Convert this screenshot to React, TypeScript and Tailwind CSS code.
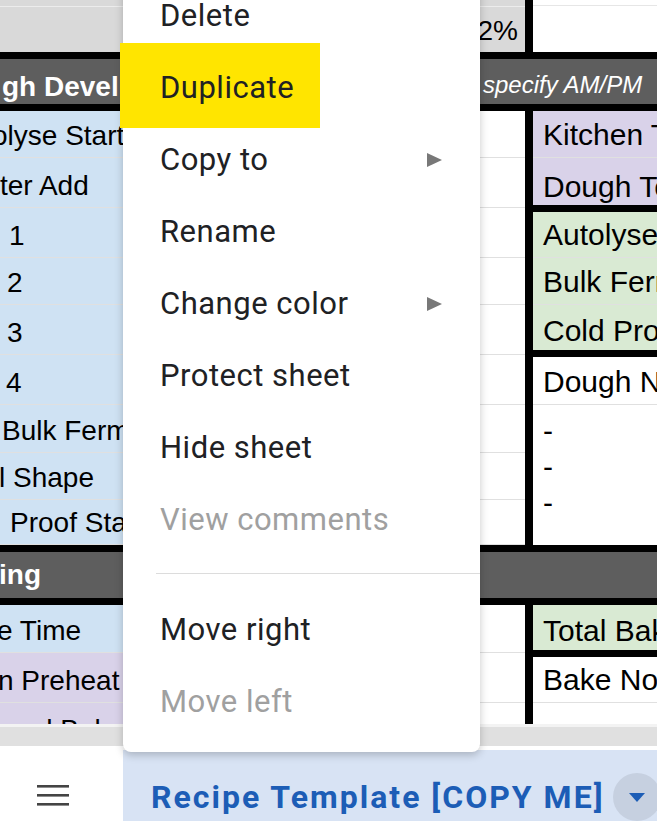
import React from 'react';

type LeftRow = { h: string; text: string; off: string; bg: string };
type RightCell = { h: string; text: string; cls: string };

// left column (A) + narrow column (B) rows of the body block
const bodyLeft: LeftRow[] = [
  { h: 'h-[47px]', text: 'olyse Start', off: '-ml-[8px]', bg: 'bg-[#cfe2f3]' },
  { h: 'h-[50px]', text: 'ter Add', off: 'ml-0', bg: 'bg-[#cfe2f3]' },
  { h: 'h-[50px]', text: '1', off: 'ml-[9px]', bg: 'bg-[#cfe2f3]' },
  { h: 'h-[47px]', text: '2', off: 'ml-[7px]', bg: 'bg-[#cfe2f3]' },
  { h: 'h-[50px]', text: '3', off: 'ml-[7px]', bg: 'bg-[#cfe2f3]' },
  { h: 'h-[50px]', text: '4', off: 'ml-[6px]', bg: 'bg-[#cfe2f3]' },
  { h: 'h-[48px]', text: 'Bulk Ferm', off: 'ml-[2px]', bg: 'bg-[#cfe2f3]' },
  { h: 'h-[47px]', text: 'l Shape', off: '-ml-[1px]', bg: 'bg-[#cfe2f3]' },
  { h: 'h-[45px]', text: 'Proof Sta', off: 'ml-[10px]', bg: 'bg-[#cfe2f3]' },
];

const bodyRight: RightCell[] = [
  { h: 'h-[47px]', text: 'Kitchen T', cls: 'bg-[#d9d2e9] border-b border-[#e0e0e0] pb-[7px]' },
  { h: 'h-[54px]', text: 'Dough Te', cls: 'bg-[#d9d2e9] border-b-[7px] border-black pb-[3px]' },
  { h: 'h-[46px]', text: 'Autolyse', cls: 'bg-[#d9ead3] border-b border-[#e0e0e0] pb-[7px]' },
  { h: 'h-[47px]', text: 'Bulk Ferm', cls: 'bg-[#d9ead3] border-b border-[#e0e0e0] pb-[7px]' },
  { h: 'h-[52px]', text: 'Cold Pro', cls: 'bg-[#d9ead3] border-b-[7px] border-black pb-[4px]' },
  { h: 'h-[48px]', text: 'Dough N', cls: 'bg-white border-b border-[#e0e0e0] pb-[7px]' },
];

const footLeft: LeftRow[] = [
  { h: 'h-[48px]', text: 'e Time', off: '-ml-[3px]', bg: 'bg-[#cfe2f3]' },
  { h: 'h-[50px]', text: 'n Preheat', off: '-ml-[2px]', bg: 'bg-[#d9d2e9]' },
];

const menuTop = [
  { label: 'Delete' },
  { label: 'Duplicate', marked: true },
  { label: 'Copy to', sub: true },
  { label: 'Rename' },
  { label: 'Change color', sub: true },
  { label: 'Protect sheet' },
  { label: 'Hide sheet' },
  { label: 'View comments', off: true },
];

const menuBottom = [{ label: 'Move right' }, { label: 'Move left', off: true }];

function LeftRows({ rows }: { rows: LeftRow[] }) {
  return (
    <>
      {rows.map((r, i) => (
        <div key={i} className={`flex ${r.h}`}>
          <div className={`flex w-[480px] shrink-0 items-end overflow-hidden whitespace-nowrap border-b border-[#e0e0e0] pb-[7px] ${r.bg}`}>
            <span className={r.off}>{r.text}</span>
          </div>
          <div className="w-[45px] shrink-0 border-b border-[#e0e0e0] bg-white" />
        </div>
      ))}
    </>
  );
}

function RightCells({ cells }: { cells: RightCell[] }) {
  return (
    <>
      {cells.map((c, i) => (
        <div key={i} className={`flex items-end overflow-hidden whitespace-nowrap pl-[10px] text-[30px] leading-[30px] ${c.h} ${c.cls}`}>
          {c.text}
        </div>
      ))}
    </>
  );
}

function BlackBar() {
  return <div className="h-[7px] shrink-0 bg-black" />;
}

function Sheet() {
  return (
    <div className="flex h-[750px] shrink-0 flex-col overflow-hidden font-['Liberation_Sans',Arial,sans-serif] text-[28px] leading-[28px] text-black">
      {/* frozen top rows */}
      <div className="flex h-[52px] shrink-0">
        <div className="flex w-[525px] shrink-0 flex-col bg-[#d9d9d9]">
          <div className="h-[7px] border-b border-[#ececec]" />
          <div className="flex flex-1 items-end justify-end pb-[7px] pr-[7px]">2%</div>
        </div>
        <div className="w-[8px] shrink-0 bg-black" />
        <div className="flex-1 bg-white">
          <div className="h-[6px] border-b border-[#e6e6e6]" />
        </div>
      </div>
      <BlackBar />
      <div className="flex h-[45px] shrink-0 items-end bg-[#5e5e5e] text-white">
        <div className="w-[480px] shrink-0 whitespace-nowrap pb-[3px] pl-[2px] font-bold">gh Devel</div>
        <div className="whitespace-nowrap pb-[7px] pl-[3px] text-[24px] italic leading-[24px]">specify AM/PM</div>
      </div>
      <BlackBar />

      {/* body block */}
      <div className="flex h-[434px] shrink-0">
        <div className="flex w-[525px] shrink-0 flex-col">
          <LeftRows rows={bodyLeft} />
        </div>
        <div className="w-[8px] shrink-0 bg-black" />
        <div className="flex min-w-0 flex-1 flex-col">
          <RightCells cells={bodyRight} />
          <div className="h-[140px] whitespace-pre bg-white pl-[10px] pt-[8px] text-[30px] leading-[36px]">{'-\n-\n-'}</div>
        </div>
      </div>
      <BlackBar />
      <div className="flex h-[46px] shrink-0 items-end bg-[#5e5e5e] pb-[9px] font-bold text-white">
        <span className="-ml-[1px]">ing</span>
      </div>
      <BlackBar />

      {/* lower block */}
      <div className="flex h-[119px] shrink-0">
        <div className="flex w-[525px] shrink-0 flex-col">
          <LeftRows rows={footLeft} />
          <div className="flex h-[21px]">
            <div className="w-[480px] shrink-0 overflow-hidden whitespace-nowrap bg-[#d9d2e9] pt-[13px]">
              <span className="ml-[37px]">d Bake</span>
            </div>
            <div className="w-[45px] shrink-0 bg-white" />
          </div>
        </div>
        <div className="w-[8px] shrink-0 bg-black" />
        <div className="flex min-w-0 flex-1 flex-col">
          <RightCells
            cells={[
              { h: 'h-[52px]', text: 'Total Bak', cls: 'bg-[#d9ead3] border-b-[7px] border-black pb-[4px]' },
              { h: 'h-[46px]', text: 'Bake No', cls: 'bg-white border-b border-[#e0e0e0] pb-[7px]' },
            ]}
          />
          <div className="h-[21px] bg-white" />
        </div>
      </div>

      {/* scroll strip */}
      <div className="h-[26px] shrink-0 border-t-[3px] border-b-[4px] border-t-[#f3f3f3] border-b-white bg-[#e0e0e0]" />
    </div>
  );
}

function MenuItem({ label, sub, off, marked }: { label: string; sub?: boolean; off?: boolean; marked?: boolean }) {
  return (
    <div className="relative flex h-[72px] items-center justify-between pl-[37px] pr-[38px]">
      {marked && <span className="absolute left-[-3px] top-[-9px] h-[85px] w-[200px] bg-[#ffe500]" />}
      <span className={`relative whitespace-nowrap ${off ? 'text-[#a0a0a0]' : 'text-[#202124]'}`}>{label}</span>
      {sub && (
        <svg width="15" height="14" viewBox="0 0 15 14">
          <polygon points="0,0 15,7 0,14" fill="#787878" />
        </svg>
      )}
    </div>
  );
}

function SheetMenu() {
  return (
    <div className="absolute left-[123px] top-[-20px] w-[357px] rounded-b-[8px] bg-white pb-[14px] font-['Roboto',sans-serif] text-[31px] leading-[28px] tracking-[0.5px] shadow-[0_3px_8px_rgba(0,0,0,0.22)]">
      {menuTop.map((m) => (
        <MenuItem key={m.label} {...m} />
      ))}
      <div className="ml-[33px] mt-[17px] mb-[20px] h-px bg-[#dcdcdc]" />
      {menuBottom.map((m) => (
        <MenuItem key={m.label} {...m} />
      ))}
    </div>
  );
}

function BottomBar() {
  return (
    <div className="flex h-[71px] shrink-0 font-['Roboto',sans-serif]">
      <div className="w-[123px] shrink-0 bg-white pl-[37px] pt-[34px]">
        <svg width="32" height="22" viewBox="0 0 32 22">
          <rect x="0" y="1" width="32" height="2.6" fill="#444" />
          <rect x="0" y="10" width="32" height="2.6" fill="#444" />
          <rect x="0" y="19" width="32" height="2.6" fill="#444" />
        </svg>
      </div>
      <div className="flex flex-1 items-start bg-[#d8e3f4] pl-[28px]">
        <span className="whitespace-nowrap pt-[31px] text-[32px] font-bold leading-[32px] tracking-[2px] text-[#1c5db6]">
          Recipe Template [COPY ME]
        </span>
        <div className="ml-auto mr-[-4px] mt-[23px] flex h-[48px] w-[48px] shrink-0 items-center justify-center rounded-full bg-[#c6d0e0]">
          <svg width="16" height="9" viewBox="0 0 16 9">
            <polygon points="0,0 16,0 8,9" fill="#1c5db6" />
          </svg>
        </div>
      </div>
    </div>
  );
}

export default function App() {
  return (
    <div className="relative h-[821px] w-[657px] overflow-hidden bg-white">
      <div className="flex h-full flex-col">
        <Sheet />
        <BottomBar />
      </div>
      <SheetMenu />
    </div>
  );
}
